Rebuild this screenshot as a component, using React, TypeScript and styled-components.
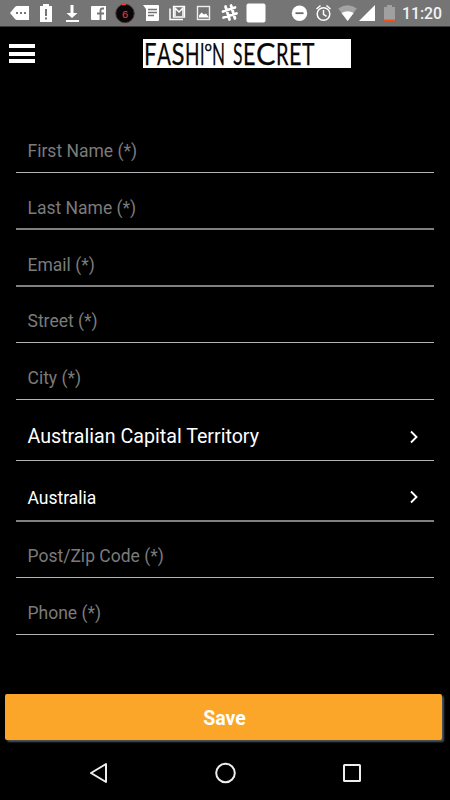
import React from "react";
import styled, { createGlobalStyle } from "styled-components";

const GlobalStyle = createGlobalStyle`
  body { margin: 0; background: #000; }
  * { box-sizing: border-box; }
`;

const Screen = styled.div`
  width: 450px;
  height: 800px;
  display: flex;
  flex-direction: column;
  overflow: hidden;
  background: #000;
  color: #fff;
  font-family: Roboto, sans-serif;
`;

const StatusBar = styled.header`
  flex: none;
  height: 27px;
  background: #757575;
  border-bottom: 1px solid #3c3c3c;
`;

const StatusContent = styled.div`
  display: flex;
  height: 27px;
  align-items: center;
`;

const StatusIcons = styled.svg`
  display: block;
  width: 396px;
  height: 27px;
`;

const Clock = styled.time`
  width: 50px;
  padding-left: 6px;
  font-size: 15.8px;
  line-height: 27px;
  font-weight: 500;
  color: #f4f4f4;
  white-space: nowrap;
`;

const TitleBar = styled.div`
  flex: none;
  height: 75px;
  padding: 12px 0 0 9px;
  display: flex;
  align-items: flex-start;
`;

const MenuButton = styled.div`
  width: 26px;
  margin: 5px 108px 0 0;
  display: grid;
  gap: 3.500px;
`;

const MenuBar = styled.span`
  height: 4px;
  background: #fff;
`;

const Logo = styled.svg`
  width: 208px;
  height: 29px;
  overflow: visible;
  background: #fff;
  font-family: Lato, sans-serif;
`;

const Form = styled.main`
  flex: none;
  height: 592px;
  padding: 14px 16px 0;
`;

const Row = styled.div<{ $height: number; $soft?: boolean; $filled?: boolean; $size?: number; $drop?: number }>`
  height: ${(p) => p.$height}px;
  padding: ${(p) => p.$drop ?? 0}px 14px 0 11.5px;
  display: flex;
  align-items: center;
  justify-content: space-between;
  border-bottom: ${(p) => (p.$soft ? "2px solid #808080" : "1px solid #b4b4b4")};
  color: ${(p) => (p.$filled ? "#fff" : "#7b7b7b")};
  font-size: ${(p) => p.$size ?? 17.5}px;
  line-height: 24px;
`;

const Chevron = styled.svg`
  width: 12px;
  height: 14px;
  margin-top: -1px;
`;

const SaveButton = styled.button`
  flex: none;
  width: 437px;
  height: 46px;
  margin: 0 0 0 5px;
  padding: 3px 0 0 2px;
  border: 0;
  border-radius: 2px;
  background: #fba628;
  box-shadow: 2px 2px 2px #4b565b;
  color: #fff;
  font: 700 19.5px Roboto, sans-serif;
`;

const NavBar = styled.nav`
  flex: 1;
  display: flex;
  justify-content: space-between;
  padding: 22px 88px 0 88px;
`;

const NavIcon = styled.svg`
  width: 21px;
  height: 22px;
  fill: none;
  stroke: #eee;
  stroke-width: 2;
`;

const rows = [
  { text: "First Name (*)", height: 57, drop: 13 },
  { text: "Last Name (*)", height: 57, soft: true, drop: 15 },
  { text: "Email (*)", height: 57, soft: true, drop: 15 },
  { text: "Street (*)", height: 56, drop: 13 },
  { text: "City (*)", height: 57, drop: 14 },
  { text: "Australian Capital Territory", height: 61, drop: 14, size: 19.65, filled: true },
  { text: "Australia", height: 61, drop: 14, size: 17.5, filled: true, soft: true },
  { text: "Post/Zip Code (*)", height: 56, drop: 13 },
  { text: "Phone (*)", height: 57, drop: 14 },
];

function Notifications() {
  return (
    <StatusIcons viewBox="0 0 396 27" fill="#fff">
      <path d="M10 13l5-6q1-1 2-1h12v14H17q-1 0-2-1z" />
      <path d="M16 12h2v2h-2zM20 12h2v2h-2zM24 12h2v2h-2z" fill="#757575" />
      <path d="M40 6h3V4h6v2h3v16H40z" />
      <path d="M45 9h2v7h-2zM45 17.500h2v2h-2z" fill="#757575" />
      <path d="M70.500 5h3v8h4l-5.500 5-5.500-5h4zM66 20h13v2H66z" />
      <path d="M92 6h14v14H92q-1 0-1-1V7q0-1 1-1z" />
      <path d="M104 8.500h-1.500q-2 0-2 2v9.500M97 13.500h7" fill="none" stroke="#757575" strokeWidth="1.800" />
      <circle cx="125" cy="13.500" r="9.200" fill="#070707" stroke="#483030" />
      <path d="M122 4.800q2-.7 4-.2" fill="none" stroke="#f33" strokeWidth="1.500" />
      <text x="121.700" y="17.500" fill="#f33" fontSize="11" fontFamily="Liberation Mono">6</text>
      <path d="M143 5h15q1 0 1 1v14q0 1-1 1h-12V9z" />
      <path d="M148 9.500h9M148 12.500h9M148 15.500h6" stroke="#757575" strokeWidth="1.400" />
      <path d="M173.500 6.500h11v10.500h-11z" fill="none" stroke="#fff" strokeWidth="1.300" />
      <path d="M175 16V8l4 4 4-4v8M170 8.500v11h13" fill="none" stroke="#fff" strokeWidth="1.500" />
      <rect x="197.500" y="6.500" width="12" height="13" fill="none" stroke="#eee" strokeWidth="1.400" />
      <path d="M199 17.500v-2l2.500-3 2.500 2 2-1 3 4z" />
      <g fill="none" stroke="#fff" strokeWidth="2.800" strokeLinecap="round">
        <path d="M225.500 6.500l4 13M231 5.500l4 13M223 11.500l12-4M223.500 17.500l13-4" />
      </g>
      <rect x="246.500" y="3.500" width="19" height="19" rx="2" />
      <circle cx="299.500" cy="13.200" r="7.700" />
      <path d="M295.500 13.200h8" stroke="#696969" strokeWidth="1.800" />
      <g fill="none" stroke="#fff" strokeWidth="1.500">
        <circle cx="323.500" cy="14" r="6.300" />
        <path d="M323.500 10v4.300l3 2M316.500 9l4-3.500M330.500 9l-4-3.500" />
      </g>
      <path d="M338.300 8.500q9.200-6.500 18.500 0L347.600 21z" fill="#a3a3a3" />
      <path d="M341.500 13q6-3.500 12.200 0L347.600 21z" />
      <path d="M375 5v16h-16z" />
      <path d="M384 7h3V5h5v2h3v13h-11z" fill="#a0a0a0" />
      <path d="M384 19.500h11V21h-11z" fill="#f4511e" />
    </StatusIcons>
  );
}

const firstWord = [
  { letter: "F", x: 1, width: 12.5 },
  { letter: "A", x: 14, width: 14 },
  { letter: "S", x: 28.500, width: 13 },
  { letter: "H", x: 42, width: 14.5 },
  { letter: "I", x: 57, width: 4.5 },
  { letter: "O", x: 62, width: 6.5, raised: true },
  { letter: "N", x: 69, width: 13 },
];

const secondWord = [
  { letter: "S", x: 90, width: 9.5 },
  { letter: "E", x: 100, width: 12.5 },
  { letter: "C", x: 113, width: 19.5 },
  { letter: "R", x: 133, width: 12.5 },
  { letter: "E", x: 146, width: 12.5 },
  { letter: "T", x: 159, width: 12.5 },
];

type LogoLetter = { letter: string; x: number; width: number; raised?: boolean };

function LogoWord({ letters }: { letters: LogoLetter[] }) {
  return (
    <text fill="#080808" stroke="#080808">
      {letters.map((l) => (
        <tspan
          key={l.x}
          x={l.x}
          y={l.raised ? 12 : 26}
          fontSize={l.raised ? 10 : 31}
          strokeWidth={l.raised ? 0.7 : 0.25}
          textLength={l.width}
          lengthAdjust="spacingAndGlyphs"
        >
          {l.letter}
        </tspan>
      ))}
    </text>
  );
}

function Wordmark() {
  return (
    <Logo viewBox="0 0 208 29">
      <LogoWord letters={firstWord} />
      <LogoWord letters={secondWord} />
    </Logo>
  );
}

export default function App() {
  return (
    <>
      <GlobalStyle />
      <Screen>
        <StatusBar>
          <StatusContent>
            <Notifications />
            <Clock>11:20</Clock>
          </StatusContent>
        </StatusBar>
        <TitleBar>
          <MenuButton role="button" aria-label="Menu">
            <MenuBar />
            <MenuBar />
            <MenuBar />
          </MenuButton>
          <Wordmark />
        </TitleBar>
        <Form>
          {rows.map((row) => (
            <Row key={row.text} $height={row.height} $soft={row.soft} $filled={row.filled} $size={row.size} $drop={row.drop}>
              <span>{row.text}</span>
              {row.filled && (
                <Chevron viewBox="0 0 12 14">
                  <path d="M3 1.500L8.500 7 3 12.500" fill="none" stroke="#fff" strokeWidth="1.900" />
                </Chevron>
              )}
            </Row>
          ))}
        </Form>
        <SaveButton type="button">Save</SaveButton>
        <NavBar>
          <NavIcon viewBox="0 0 21 22"><path d="M18 2v18L3 11z" strokeLinejoin="round" /></NavIcon>
          <NavIcon viewBox="0 0 21 22"><circle cx="10.500" cy="11" r="9.300" /></NavIcon>
          <NavIcon viewBox="0 0 21 22"><rect x="3" y="3" width="16" height="16" rx=".5" /></NavIcon>
        </NavBar>
      </Screen>
    </>
  );
}
